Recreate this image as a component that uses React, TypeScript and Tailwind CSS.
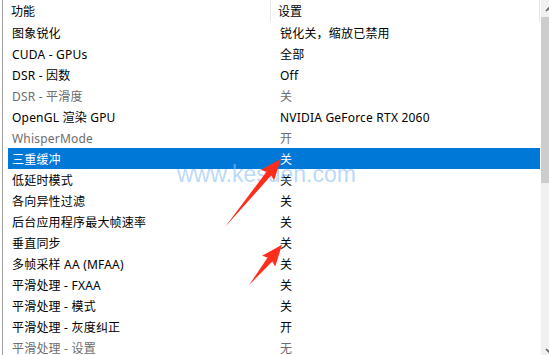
const rows: { name: string; value: string; muted?: boolean; selected?: boolean }[] = [
  { name: '图象锐化', value: '锐化关，缩放已禁用' },
  { name: 'CUDA - GPUs', value: '全部' },
  { name: 'DSR - 因数', value: 'Off' },
  { name: 'DSR - 平滑度', value: '关', muted: true },
  { name: 'OpenGL 渲染 GPU', value: 'NVIDIA GeForce RTX 2060' },
  { name: 'WhisperMode', value: '开', muted: true },
  { name: '三重缓冲', value: '关', selected: true },
  { name: '低延时模式', value: '关' },
  { name: '各向异性过滤', value: '关' },
  { name: '后台应用程序最大帧速率', value: '关' },
  { name: '垂直同步', value: '关' },
  { name: '多帧采样 AA (MFAA)', value: '关' },
  { name: '平滑处理 - FXAA', value: '关' },
  { name: '平滑处理 - 模式', value: '关' },
  { name: '平滑处理 - 灰度纠正', value: '开' },
  { name: '平滑处理 - 设置', value: '无', muted: true },
]

function Arrow({ x, y, len, angle }: { x: number; y: number; len: number; angle: number }) {
  // tail at (x,y), pointing along angle
  const L = len
  return (
    <g transform={`translate(${x} ${y}) rotate(${angle})`}>
      <polygon
        points={`0,0 ${L - 19},-3 ${L - 21},-8.5 ${L},0 ${L - 21},8.5 ${L - 19},3`}
        fill="#ff2d1c"
      />
    </g>
  )
}

export default function App() {
  return (
    <div
      className="relative w-[549px] h-[355px] overflow-hidden bg-white text-[12px] text-black flex"
      style={{ fontFamily: '"Noto Sans", "Noto Sans CJK SC", sans-serif' }}
    >
      {/* left frame line */}
      <div className="w-[3px] shrink-0 border-r border-[#a0a0a0]" />
      <div className="w-[5px] shrink-0" />

      {/* list */}
      <div className="w-[532px] shrink-0 flex flex-col">
        {/* header */}
        <div className="h-[22px] shrink-0 flex items-center">
          <div className="w-[263px] h-full flex items-center pt-[1px] pl-[3px] border-r border-[#e5e5e5]">功能</div>
          <div className="w-[269px] h-full flex items-center pt-[1px] pl-[7px] border-r border-[#e5e5e5]">设置</div>
        </div>
        {rows.map((r) => (
          <div
            key={r.name}
            className={
              'h-[21px] shrink-0 flex items-center pt-[2px] ' +
              (r.selected ? 'bg-[#0078d7] text-white' : r.muted ? 'text-[#6d6d6d]' : '')
            }
          >
            <div className="w-[263px] pl-[4px] whitespace-nowrap tracking-[0.2px]">{r.name}</div>
            <div className="w-[269px] pl-[9px] whitespace-nowrap tracking-[0.2px]">{r.value}</div>
          </div>
        ))}
      </div>

      {/* scrollbar (clipped) */}
      <div className="w-[8px] shrink-0 ml-[1px] overflow-hidden">
        <div className="w-[17px] h-full bg-[#f0f0f0] flex flex-col">
          <div className="h-[17px] shrink-0 flex items-center justify-center">
            <svg width="9" height="6" viewBox="0 0 9 6">
              <path d="M1 5 L4.5 1.5 L8 5" stroke="#606060" strokeWidth="1.6" fill="none" />
            </svg>
          </div>
          <div className="h-[166px] shrink-0 bg-[#cdcdcd]" />
          <div className="flex-1" />
          <div className="h-[17px] shrink-0 flex items-center justify-center mb-[-4px]">
            <svg width="9" height="6" viewBox="0 0 9 6">
              <path d="M1 1 L4.5 4.5 L8 1" stroke="#606060" strokeWidth="1.6" fill="none" />
            </svg>
          </div>
        </div>
      </div>

      {/* watermark */}
      <div
        className="absolute left-[177px] top-[163px] text-[23px] leading-none text-[#8cc0f7]/60 pointer-events-none"
        style={{ fontFamily: '"Liberation Sans", Arial, sans-serif' }}
      >
        www.kesuen.com
      </div>

      {/* annotation arrows */}
      <svg className="absolute inset-0 pointer-events-none" width="549" height="355">
        <Arrow x={225} y={227} len={88} angle={-50.6} />
        <Arrow x={249} y={285} len={52} angle={-50.6} />
      </svg>
    </div>
  )
}
